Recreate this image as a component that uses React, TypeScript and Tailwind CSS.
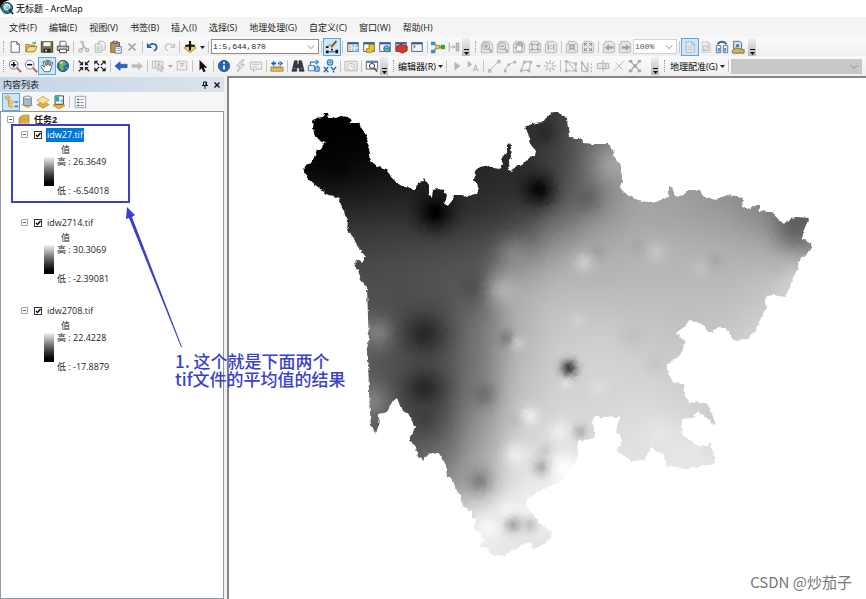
import { useState } from 'react';
import type { ReactNode } from 'react';
import clsx from 'clsx';

const GREY = '#b4b4b4';
const INK = '#222222';

const page = (stroke: string, fill = '#ffffff') => (
  <path d="M3.500 2h6.500l3 3v9H3.500z M10 2v3h3" fill={fill} stroke={stroke} />
);

const table = (extra?: ReactNode) => (
  <>
    <rect x="2" y="3" width="12" height="10" fill="#f4f8fc" stroke="#4a5568" />
    <path d="M2 4h12" stroke="#2f62a8" strokeWidth="2" />
    {extra}
  </>
);

const greyPage = (inner: ReactNode) => (
  <>
    <path d="M1.500 4.500h2v-3h8l3 3v9h-2v1h-11z" fill="#e6e6e6" stroke={GREY} />
    {inner}
  </>
);

const icons: Record<string, ReactNode> = {
  newDoc: page('#4d5a6b'),
  open: (
    <>
      <path d="M2 13V5h4l1 1h5v2" fill="#e9bf55" stroke="#9a7524" />
      <path d="M2 13.500l3-6h10l-3 6z" fill="#f9dc82" stroke="#9a7524" />
      <path d="M9 4c2-2 3-1 4 0m0-2v2h-2" fill="none" stroke="#2a9a4a" />
    </>
  ),
  save: (
    <>
      <path d="M1.500 2h13v12h-13z" fill="#77754a" stroke="#383a2c" />
      <path d="M4 2.500h8V7H4z" fill="#f5f5ee" />
      <path d="M4 10h8v4H4z" fill="#2b2b2b" />
      <path d="M6 11h2v2H6z" fill="#ddd" />
    </>
  ),
  print: (
    <>
      <path d="M4.500 7V1.500h6l1 1V7" fill="#fff" stroke="#555" />
      <path d="M1.500 7h13v5h-13z" fill="#c9c9bd" stroke="#3d3d3d" />
      <path d="M4 10.500h8v4H4z" fill="#fafafa" stroke="#333" />
      <path d="M11 8.500h2" stroke="#d1a30d" />
    </>
  ),
  cut: (
    <g fill="none" stroke={GREY} strokeWidth="1.500">
      <path d="M4 1l6 9M7 1v8l-3 2" />
      <circle cx="4" cy="12" r="1.800" />
      <circle cx="11.500" cy="11.500" r="1.800" />
    </g>
  ),
  copy: (
    <g fill="#f1f1f1" stroke={GREY}>
      <path d="M6.500 1.500h5.500l2 2v7.500H6.500z" />
      <path d="M2.500 4.500H8l2 2V14H2.500z" />
      <path d="M4 8h4M4 10h4M4 12h4" />
    </g>
  ),
  paste: (
    <>
      <rect x="2" y="3" width="10" height="11" fill="#c39253" stroke="#79501e" />
      <path d="M4.500 1.500h5v2.500h-5z" fill="#aaa" stroke="#555" />
      <path d="M7 7.500h7V15H7z" fill="#fff" stroke="#4868a0" />
      <path d="M8.500 9.500h4M8.500 12h4" stroke="#6d8ec4" />
    </>
  ),
  remove: <path d="M4 4l8 8M12 4l-8 8" stroke="#a3a3a3" strokeWidth="2" />,
  undo: (
    <>
      <path d="M4 6c4-3 9-1 8 3c0 2-2 3-3 3" fill="none" stroke="#2c5fa5" strokeWidth="2" />
      <path d="M1 3v6h6z" fill="#2c5fa5" />
    </>
  ),
  redo: (
    <>
      <path d="M12 6c-4-3-9-1-8 3c0 2 2 3 3 3" fill="none" stroke="#c9c9c9" strokeWidth="1.600" />
      <path d="M15 3v6H9z" fill="#c9c9c9" />
    </>
  ),
  addData: (
    <>
      <path d="M8 4l7 5l-7 5.500l-7-5.500z" fill="#f0cb7a" stroke="#b58a2a" />
      <path d="M8 1v11M2.500 6.500h11" stroke="#111" strokeWidth="2.400" />
    </>
  ),
  editorBar: (
    <>
      <path d="M2 8l4-3l2 3l5-6" fill="none" stroke="#ceb16b" strokeWidth="1.500" />
      <path d="M7 8l6-7" stroke="#7b552d" strokeWidth="2" />
      <path d="M1 7h3v2H1zM1 12h3v3H1zM7 10h2v2H7zM12 11h3v4h-3zM1 13h14v1H1z" fill="#111" />
    </>
  ),
  contents: table(
    <>
      <path d="M3 7h3M3 9h3M3 11h3" stroke="#dc9b28" />
      <path d="M7 5h7v8H7z" fill="#9bc9ec" />
      <path d="M7 9h7M10 5v8" stroke="#fff" />
    </>,
  ),
  catalog: table(<path d="M8 5h6v6l-3 3H5v-4h3z" fill="#edc524" stroke="#9a7a13" />),
  search: table(
    <>
      <circle cx="10" cy="10" r="3.500" fill="#77b8df" stroke="#27618f" />
      <path d="M7 10h6" stroke="#2e9a4c" strokeWidth="1.400" />
    </>,
  ),
  toolbox: table(<path d="M3 7l5-2l7 2v5l-5 3l-7-3z" fill="#d33a2a" stroke="#8a1f17" />),
  python: table(<path d="M4 6l2 1.500l-2 1.500" fill="none" stroke="#222" />),
  model: (
    <>
      <path d="M3 4l5 4M3 12l5-4h4" fill="none" stroke="#333" />
      <path d="M0 2h5v4H0zM0 11h5v4H0z" fill="#2f8fd4" />
      <path d="M5.500 6h4v4h-4z" fill="#f2cf2a" stroke="#8b760e" strokeWidth=".7" />
      <path d="M11 5.500h5v5h-5z" fill="#3aa53b" />
    </>
  ),
  snap: (
    <g stroke="#9b9b9b">
      <path d="M2.500 3v10M4 8h5M7 6l2 2l-2 2" fill="none" />
      <path d="M10.500 3.500h3v9h-3z" fill="#c8c8c8" />
    </g>
  ),
  pZoomIn: greyPage(
    <g fill="none" stroke="#989898">
      <circle cx="7" cy="7" r="4" />
      <path d="M5 7h4M7 5v4M10 10l4 4" strokeWidth="1.500" />
    </g>,
  ),
  pZoomOut: greyPage(
    <g fill="none" stroke="#989898">
      <circle cx="7" cy="7" r="4" />
      <path d="M5 7h4M10 10l4 4" strokeWidth="1.500" />
    </g>,
  ),
  pPan: greyPage(<path d="M3 8l3 5h5l1.500-8L11 4v4V3H9v4V3H7v4V4H5v5z" fill="#fafafa" stroke="#989898" />),
  pFull: greyPage(
    <>
      <circle cx="8" cy="8" r="3.500" fill="none" stroke="#a3a3a3" />
      <path d="M3 4l2.500 2M13 4l-2.500 2M3 12l2.500-2M13 12l-2.500-2" stroke="#949494" strokeWidth="1.800" />
    </>,
  ),
  pOne: greyPage(<path d="M5 5v6M11 5v6M8 6v1M8 9v1" stroke="#a3a3a3" strokeWidth="1.500" />),
  pIn: greyPage(<path d="M4 4l3 3M12 4L9 7M4 12l3-3M12 12l-3-3M4.500 7H7V4.500M9 4.500V7h2.500M4.500 9H7v2.500M11.500 9H9v2.500" fill="none" stroke="#8e8e8e" />),
  pOut: greyPage(<path d="M4 4l3 3M12 4L9 7M4 12l3-3M12 12l-3-3M4 7V4h3M9 4h3v3M4 9v3h3M12 9v3H9" fill="none" stroke="#8e8e8e" />),
  pPrev: greyPage(<path d="M3 8.500l5-4V7h5v3H8v2.500z" fill="#a3a3a3" />),
  pNext: greyPage(<path d="M14 8.500l-5-4V7H4v3h5v2.500z" fill="#a3a3a3" />),
  draft: (
    <>
      {page('#a9b4bd', '#e4ebf0')}
      <path d="M5 7h6M5 9h6M5 11h6" stroke="#c1c8cd" />
    </>
  ),
  focusFrame: (
    <>
      {page('#c7c7c7', '#eeeeee')}
      <path d="M5 7h6v5H5zM5 12l6-5" fill="none" stroke="#b7b7b7" />
    </>
  ),
  changeLayout: (
    <>
      <path d="M1.500 6.500h5v8h-5zM9.500 6.500h5v8h-5z" fill="#fff" stroke="#5a6673" />
      <path d="M3 5c2-4 8-4 10 0" fill="none" stroke="#2f6ea8" strokeWidth="2.200" />
      <path d="M3 9h3v4H3zM10 9h3v4h-3z" fill="#5c9bd0" />
    </>
  ),
  drivenPages: (
    <>
      <path d="M3 1.500h7l2 2V11H3z" fill="#d5e1ea" stroke="#596270" />
      <path d="M1 13l4-4l10 2v4H2z" fill="#cfb45d" stroke="#77672d" />
      <circle cx="7.500" cy="6.500" r="2" fill="#5f7e8d" />
    </>
  ),
  zoomIn: (
    <>
      <circle cx="6.500" cy="6.500" r="5" fill="#fff" stroke="#666" />
      <path d="M3.500 6.500h6M6.500 3.500v6" stroke="#111" strokeWidth="1.800" />
      <path d="M10 10l5 5" stroke="#a35b4c" strokeWidth="2" />
    </>
  ),
  zoomOut: (
    <>
      <circle cx="6.500" cy="6.500" r="5" fill="#fff" stroke="#777" />
      <path d="M3.500 6.500h6" stroke="#111" strokeWidth="1.800" />
      <path d="M10 10l5 5" stroke="#a35b4c" strokeWidth="2" />
    </>
  ),
  hand: (
    <path
      d="M5 14.500L1 8.500L2.500 7L5 9.500L3.500 3l1.500-.5L7 7.500L7 1.500h1.500L9 7l1-5.500l1.500.5L11 8l2-4.500L14.500 4l-2 7l-1 3.500z"
      fill="#fff"
      stroke="#394858"
      strokeWidth=".9"
    />
  ),
  globe: (
    <>
      <circle cx="8" cy="8" r="6.500" fill="#2a6cc0" stroke="#1c3e70" strokeWidth=".8" />
      <path d="M4 4l5-2l3 4l-4 2l1 4l-3 1l-2-4zM11 9l3 1l-2 2z" fill="#78b845" />
      <path d="M4 4l4-2l-2 4z" fill="#d9eab1" />
    </>
  ),
  fixedIn: (
    <>
      <path d="M2 2l4 4M14 2l-4 4M2 14l4-4M14 14l-4-4" stroke={INK} strokeWidth="1.500" />
      <path d="M7 7H2.500L7 2.500zM9 7h4.500L9 2.500zM7 9H2.500L7 13.500zM9 9h4.500L9 13.500z" fill={INK} />
    </>
  ),
  fixedOut: (
    <>
      <path d="M3 3l4 4M13 3L9 7M3 13l4-4M13 13L9 9" stroke={INK} strokeWidth="1.500" />
      <path d="M1.500 2h4.500L1.500 6.500zM14.500 2H10l4.500 4.500zM1.500 14h4.500l-4.500-4.500zM14.500 14H10l4.500-4.500z" fill={INK} />
    </>
  ),
  back: <path d="M1 8l6-5V6h8v4H7v3z" fill="#1f65cf" stroke="#174897" strokeWidth=".6" />,
  forward: <path d="M15 8L9 3v3H2v4h7v3z" fill="#bdbdbd" />,
  selectFeat: (
    <g fill="#ededed" stroke={GREY}>
      <path d="M1.500 2.500h12v8h-12zM5 2.500v8M9 2.500v8" />
      <path d="M8 5v9l2-2l2 3l1-1l-1-3h3z" fill="#d8d8d8" />
    </g>
  ),
  clearSel: (
    <g fill="#f1f1f1" stroke={GREY}>
      <path d="M2.500 2.500h11v10h-11z" />
      <path d="M6 5h4l-2 4z" />
    </g>
  ),
  pointer: <path d="M4 1v12l2.500-2.500l2 4.500l2.500-1l-2-4H13z" fill="#111" />,
  info: (
    <>
      <circle cx="8" cy="8" r="6.500" fill="#2462b5" stroke="#173f7d" strokeWidth=".7" />
      <path d="M8 3.500v2M8 7v5" stroke="#fff" strokeWidth="2" />
    </>
  ),
  lightning: <path d="M10 1L4 8h3.500L5 15l8-9H9l4-5z" fill="#e6e6e6" stroke={GREY} />,
  popup: (
    <>
      <path d="M1.500 3.500h13v8H8l-3 3v-3H1.500z" fill="#f1f1f1" stroke={GREY} />
      <path d="M4 6h8M4 9h5" stroke={GREY} />
    </>
  ),
  measure: (
    <>
      <path d="M1 9h14v5H1z" fill="#e6b96b" stroke="#9b7439" strokeWidth=".8" />
      <path d="M4 9v2M7 9v2M10 9v2M12 9v2" stroke="#7a5720" strokeWidth=".7" />
      <path d="M1 5l4-3v6zM15 5l-4-3v6zM4 4h3v2H4zM9 4h3v2H9z" fill="#1964bc" />
    </>
  ),
  binoculars: (
    <>
      <path d="M4 2h3v4h2V2h3l3 12H9.500v-4h-3v4H1z" fill="#333a42" stroke="#20252a" strokeWidth=".7" />
      <path d="M3 11h2M11 11h2" stroke="#a1a9b2" />
    </>
  ),
  route: (
    <>
      <path d="M1.500 7.500h7v6h-7z" fill="#e8f2f9" stroke="#2e75ad" />
      <path d="M4 7V3.500h7M10 1l3 2.500L10 6M12 7v3" fill="none" stroke="#2e83c5" strokeWidth="1.400" />
      <path d="M9 9h5v5H9z" fill="#8abbe0" stroke="#2e75ad" />
    </>
  ),
  goXY: (
    <>
      <circle cx="8" cy="4" r="3" fill="#fff" stroke="#2783c4" strokeWidth="1.500" />
      <path d="M8 2v4M6 4h4" stroke="#2783c4" />
      <path d="M1 9l5 6M6 9l-5 6M9 9l3 3.500L15 9M12 12v3.500" fill="none" stroke="#1769ae" strokeWidth="1.600" />
    </>
  ),
  clock: (
    <>
      <path d="M1 2.500h14v11H1z" fill="#e9e9e9" stroke={GREY} />
      <circle cx="8" cy="9" r="4" fill="#fafafa" stroke={GREY} />
      <path d="M8 6.500V9h2.500" fill="none" stroke={GREY} />
    </>
  ),
  viewer: (
    <>
      <path d="M1.500 2.500h13v9h-13z" fill="#fff" stroke="#465a70" />
      <path d="M1.500 3.500h13" stroke="#5c80ad" strokeWidth="2" />
      <circle cx="8" cy="8" r="3" fill="#e7eff6" stroke="#333" />
      <path d="M10 10l4 4.500" stroke="#90503f" strokeWidth="2" />
    </>
  ),
  editTool: <path d="M5 3v10l7-5z" fill="#b5b5b5" />,
  editNote: (
    <>
      <path d="M2 2v8l5-4z" fill="#b5b5b5" />
      <path d="M8 14l3-7l3 7M9 12h4" fill="none" stroke="#b5b5b5" strokeWidth="1.200" />
    </>
  ),
  straight: <path d="M4 12l8-8M1.500 12h3v3h-3zM12 1.500h3v3h-3z" fill="#c3c3c3" stroke={GREY} />,
  arc: (
    <>
      <path d="M3 13c0-4 4-8 10-9" fill="none" stroke={GREY} />
      <path d="M1 12h3v3H1zM12 2h3v3h-3zM5 5h3v3H5z" fill={GREY} />
    </>
  ),
  trace: (
    <>
      <path d="M2.500 13h9l2-10H6L2.500 13" fill="none" stroke={GREY} strokeWidth="1.200" />
      <path d="M1 12h3v3H1zM5 2h3v3H5zM12 2h3v3h-3zM10 12h3v3h-3z" fill={GREY} />
    </>
  ),
  burst: <path d="M8 1v5M8 10v5M1 8h5M10 8h5M3 3l3 3M10 10l3 3M13 3l-3 3M3 13l3-3" stroke={GREY} strokeWidth="1.300" />,
  vertices: (
    <>
      <path d="M2.500 2.500v11h11zM2.500 2.500l11 3v8" fill="none" stroke="#adadad" />
      <path d="M1 1h3v3H1zM1 12h3v3H1zM12 12h3v3h-3zM12 4h3v3h-3z" fill={GREY} />
    </>
  ),
  reshape: <path d="M2 14V3l7 11V4M2 14h7M13 5v2M13 9v2M13 13v2" fill="none" stroke="#adadad" strokeWidth="1.300" />,
  cutPoly: <path d="M1.500 5h13v6h-13zM8 1v14M11 5v6" fill="#e6e6e6" stroke="#ababab" />,
  splitLine: <path d="M2 14L14 2M4 4l8 8" stroke={GREY} />,
  rotate: (
    <>
      <path d="M3 3l10 10M13 3L3 13" stroke="#9f9f9f" strokeWidth="1.300" />
      <path d="M1 1h4v3H1zM11 1h4v3h-4zM1 12h4v3H1zM11 12h4v3h-4zM6 6h4v4H6z" fill="#a9a9a9" />
    </>
  ),
  byOrder: (
    <>
      <path d="M5 5v8h5M5 8h5" fill="none" stroke="#888" />
      <path d="M4 0l3.500 3L4 6L.5 3z" fill="#eeb64a" stroke="#c08a2b" strokeWidth=".6" />
      <path d="M8 5l3 3l-3 3l-3-3z" fill="#f4ca70" stroke="#c08a2b" strokeWidth=".6" />
      <path d="M8 11l3 2.500L8 16l-3-2.500z" fill="#eeb64a" />
      <path d="M12 8h4M12 13h4" stroke="#4e7eb5" strokeWidth="1.800" />
    </>
  ),
  bySource: (
    <>
      <path d="M1 11l6-3l8 4l-6 3z" fill="#f0bd54" />
      <path d="M4 3v8c1 2 8 2 9 0V3z" fill="#a8bad0" stroke="#53657c" strokeWidth=".8" />
      <ellipse cx="8.500" cy="3" rx="4.500" ry="1.800" fill="#e8eff7" stroke="#53657c" strokeWidth=".8" />
    </>
  ),
  byVisible: (
    <>
      <path d="M8 7l7 4l-7 4l-7-4z" fill="#e5ab43" stroke="#b57d23" strokeWidth=".7" />
      <path d="M8 1.500L15 6l-7 4.500L1 6z" fill="#fae2a5" stroke="#c69139" strokeWidth=".8" />
    </>
  ),
  bySelection: (
    <>
      <path d="M8 8l7 4l-7 4l-7-4z" fill="#e9ae3d" stroke="#a8761f" strokeWidth=".7" />
      <path d="M3.500 1h9.500v9.500H3.500z" fill="#fff" stroke="#333" />
      <path d="M4 1.500h4v6H4z" fill="#23aab4" />
      <path d="M8 5l4.500 5V5z" fill="#7ac3d5" />
    </>
  ),
  options: (
    <>
      <path d="M2.500 1.500h12v13h-12z" fill="#fafbfc" stroke="#8b97a4" />
      <path d="M5 4.500h2v1H5zM5 8h2v1H5zM5 11.500h2v1H5z" fill="#355d8f" stroke="#355d8f" strokeWidth=".6" />
      <path d="M8.500 5h4M8.500 8.500h4M8.500 12h4" stroke="#888" />
    </>
  ),
};

function Icon({ name }: { name: string }) {
  return (
    <svg viewBox="0 0 16 16" className="block h-[14px] w-[14px]" fill="none" aria-hidden="true">
      {icons[name]}
    </svg>
  );
}

function Caret({ muted = false }: { muted?: boolean }) {
  return (
    <svg viewBox="0 0 8 8" className="h-2 w-2 shrink-0" aria-hidden="true">
      <path d="M2 3h5L4.500 6z" fill={muted ? '#aaaaaa' : '#222222'} />
    </svg>
  );
}

function Sep() {
  return (
    <span className="flex h-3 w-[5px] shrink-0 justify-center">
      <span className="w-px bg-[#c4c4c4]" />
    </span>
  );
}

function Grip() {
  return (
    <span className="flex w-[7px] shrink-0 justify-center">
      <span className="h-3 border-l border-dotted border-[#9c9c9c]" />
    </span>
  );
}

function Overflow() {
  return (
    <button aria-label="More" className="flex h-[18px] w-2 shrink-0 items-end bg-linear-to-b from-[#f0f0f0] to-[#b8b8b8]">
      <svg viewBox="0 0 8 8" className="h-2 w-2" aria-hidden="true">
        <path d="M2 1h5v1H2zM2 4h5L4.500 7z" fill="#111111" />
      </svg>
    </button>
  );
}

function ToolButton({ name, active }: { name: string; active?: boolean }) {
  return (
    <button
      aria-label={name}
      className={clsx(
        'flex h-4 w-4 shrink-0 items-center justify-center',
        active && 'bg-[#cfe6f8] outline outline-[#5aa7e0]',
      )}
    >
      <Icon name={name} />
    </button>
  );
}

// '|' separator, 'v' caret, 'x' greyed caret, '*' prefix marks a pressed tool
function Tools({ items }: { items: string }) {
  return (
    <>
      {items.split(' ').map((item, i) => {
        if (item === '|') return <Sep key={i} />;
        if (item === 'v' || item === 'x') return <Caret key={i} muted={item === 'x'} />;
        return <ToolButton key={i} name={item.replace('*', '')} active={item.startsWith('*')} />;
      })}
    </>
  );
}

function Chevron() {
  return (
    <svg viewBox="0 0 10 10" className="pointer-events-none absolute top-1 right-1 h-2 w-2" aria-hidden="true">
      <path d="M1 3l4 4l4-4" fill="none" stroke="#777777" />
    </svg>
  );
}

const menus = ['文件(F)', '编辑(E)', '视图(V)', '书签(B)', '插入(I)', '选择(S)', '地理处理(G)', '自定义(C)', '窗口(W)', '帮助(H)'];

interface RasterLayer {
  name: string;
  high: string;
  low: string;
}

const layers: RasterLayer[] = [
  { name: 'idw27.tif', high: '26.3649', low: '-6.54018' },
  { name: 'idw2714.tif', high: '30.3069', low: '-2.39081' },
  { name: 'idw2708.tif', high: '22.4228', low: '-17.8879' },
];

function Expander() {
  return (
    <svg viewBox="0 0 7 7" className="h-[7px] w-[7px] shrink-0" aria-hidden="true">
      <path d="M.5.5h6v6h-6z" fill="#fff" stroke="#a5a5a5" />
      <path d="M2 3.500h3" stroke="#3f5f9f" />
    </svg>
  );
}

function LayerItem({ layer, selected }: { layer: RasterLayer; selected: boolean }) {
  const [visible, setVisible] = useState(true);
  return (
    <li className="mb-[18px]">
      <div className="flex h-[15px] items-center pl-5">
        <Expander />
        <label className="flex items-center">
          <span className="relative ml-[6px] h-2 w-2">
            <input
              type="checkbox"
              checked={visible}
              onChange={(e) => setVisible(e.target.checked)}
              className="block h-2 w-2 appearance-none border border-[#333333] bg-white"
            />
            {visible && (
              <svg viewBox="0 0 8 8" className="pointer-events-none absolute inset-0 h-2 w-2" aria-hidden="true">
                <path d="M2 4l1.500 1.500L6.500 2" fill="none" stroke="#000" strokeWidth="1.300" />
              </svg>
            )}
          </span>
          <span
            className={clsx(
              'ml-1 flex h-[14px] items-center px-px',
              selected && 'bg-[#0078d7] text-white',
            )}
          >
            {layer.name}
          </span>
        </label>
      </div>
      <div className="flex h-[14px] items-center pl-[60px]">值</div>
      <div className="flex h-[41px] pl-[43px]">
        <div className="mt-px h-[29px] w-[10px] bg-linear-to-b from-[#f5f5f5] to-black" />
        <div className="ml-[3px] flex flex-col justify-between leading-3">
          <span>高 : {layer.high}</span>
          <span>低 : {layer.low}</span>
        </div>
      </div>
    </li>
  );
}

// Province outline, map units
const outline =
  '312,122 316,118 324,117 325,113 327,113 328,118 335,118 340,116 349,117 351,123 359,123 362,129 366,134 369,148 371,161 378,167 387,169 391,177 397,183 405,188 407,186 412,190 416,190 417,183 423,181 424,178 426,181 429,185 429,194 432,197 433,190 438,189 444,190 447,195 446,200 443,203 448,206 451,202 454,195 462,195 467,197 470,195 477,194 479,188 474,180 475,172 480,167 489,165 493,168 500,169 503,165 500,160 502,156 507,153 507,145 509,143 511,147 512,157 509,163 508,168 512,171 515,167 522,165 527,160 529,157 535,155 536,151 531,145 529,133 524,127 535,123 544,122 547,116 553,112 558,112 561,115 567,118 568,128 569,137 575,139 580,139 582,137 583,143 593,144 608,144 613,150 615,159 619,163 621,172 623,182 619,187 625,193 635,199 647,202 657,202 663,198 668,197 669,187 672,187 675,197 683,195 689,190 700,190 703,197 713,200 727,195 744,197 743,207 751,209 754,205 759,205 760,211 772,212 777,218 784,224 790,218 797,217 809,218 806,225 801,237 812,245 812,249 805,255 799,262 797,270 792,280 790,287 787,293 785,297 773,295 767,296 765,303 766,308 760,320 755,332 747,339 736,341 731,337 726,328 718,328 712,332 707,332 705,326 697,322 688,321 685,326 676,333 680,337 685,342 684,350 678,357 667,365 667,370 672,380 673,383 683,384 685,395 689,403 697,401 708,404 711,412 713,417 716,425 712,423 707,418 702,414 697,411 694,418 683,419 681,427 682,436 688,437 693,443 699,446 710,445 713,452 715,463 707,465 698,467 685,469 673,466 665,468 666,462 663,453 657,452 652,447 648,452 645,460 632,461 623,456 617,449 622,446 621,437 616,434 617,425 621,417 610,417 594,417 593,423 595,437 587,439 578,442 577,450 579,457 573,465 560,482 548,487 528,498 525,503 532,513 540,523 552,532 551,538 543,545 533,549 531,542 522,545 510,552 503,556 492,555 488,548 480,546 484,540 478,531 473,529 477,518 472,518 472,512 463,506 461,495 456,490 453,480 448,477 447,467 442,458 438,452 428,454 423,460 418,457 416,447 410,440 415,427 408,413 402,411 397,398 392,402 387,412 379,414 378,428 376,433 371,426 370,413 369,390 368,357 366,352 369,340 368,317 367,287 361,280 358,270 354,265 357,259 362,263 366,257 358,247 353,237 347,230 348,220 342,208 339,199 333,196 326,194 310,180 304,173 305,165 312,163 314,157 318,150 325,143 317,139 314,133';

// Interpolated surface, 40x30 cells starting at (300, 110)
const surface = [
  [0, 0, 0, 10, 30, 46, 66, 115, 140, 150, 150, 140, 105],
  [2, 4, 14, 20, 36, 44, 66, 125, 165, 160, 150, 140, 105],
  [16, 20, 26, 30, 42, 42, 74, 128, 162, 158, 145, 130, 95],
  [42, 44, 46, 44, 50, 62, 100, 142, 166, 162, 155, 138, 88],
  [62, 64, 68, 70, 76, 100, 150, 170, 176, 176, 174, 168, 135],
  [76, 76, 78, 84, 90, 160, 180, 180, 184, 184, 182, 188, 212],
  [84, 80, 78, 80, 105, 180, 192, 192, 190, 190, 190, 198, 215],
  [110, 100, 78, 76, 120, 180, 202, 206, 200, 196, 198, 212, 218],
  [98, 90, 80, 80, 120, 188, 206, 212, 208, 204, 204, 210, 215],
  [108, 105, 76, 74, 130, 194, 210, 212, 216, 210, 206, 205, 205],
  [90, 94, 78, 84, 150, 206, 218, 218, 222, 222, 196, 200, 200],
  [90, 90, 86, 108, 165, 218, 230, 226, 224, 230, 226, 220, 220],
  [110, 110, 115, 140, 180, 230, 240, 245, 230, 230, 230, 225, 225],
  [150, 150, 160, 190, 228, 245, 250, 255, 240, 235, 230, 230, 230],
  [180, 180, 190, 220, 238, 226, 222, 225, 230, 230, 230, 230, 230],
];

// Station influence: x, y, radius, grey, opacity
const stations = [
  [435, 212, 25, 0, 1],
  [539, 190, 23, 5, 1],
  [545, 132, 18, 30, 0.6],
  [337, 168, 20, 0, 0.6],
  [587, 198, 22, 80, 0.6],
  [424, 334, 30, 35, 0.9],
  [424, 388, 28, 35, 0.9],
  [424, 420, 24, 55, 0.6],
  [475, 288, 22, 60, 0.5],
  [483, 394, 18, 100, 0.7],
  [479, 481, 19, 115, 0.8],
  [569, 368, 12, 60, 1],
  [506, 338, 12, 110, 0.7],
  [542, 467, 13, 155, 0.8],
  [545, 451, 11, 185, 0.6],
  [513, 524, 13, 145, 0.8],
  [530, 525, 12, 175, 0.7],
  [515, 419, 12, 175, 0.6],
  [378, 333, 22, 155, 0.55],
  [374, 402, 24, 150, 0.6],
  [580, 432, 11, 160, 0.7],
  [613, 165, 24, 180, 0.6],
  [795, 228, 26, 85, 0.6],
  [596, 252, 12, 145, 0.5],
  [638, 247, 11, 155, 0.4],
  [715, 260, 12, 155, 0.5],
  [777, 267, 12, 175, 0.5],
  [584, 263, 15, 215, 0.7],
  [657, 252, 15, 205, 0.7],
  [700, 268, 14, 200, 0.5],
  [502, 290, 24, 200, 0.6],
  [514, 255, 24, 165, 0.4],
  [518, 343, 10, 220, 0.6],
  [530, 416, 14, 244, 0.8],
  [560, 432, 15, 242, 0.8],
  [516, 455, 17, 244, 0.8],
  [565, 468, 20, 255, 1],
  [487, 527, 18, 252, 0.7],
  [507, 510, 14, 252, 0.6],
  [566, 384, 8, 232, 0.7],
  [599, 387, 12, 228, 0.6],
  [578, 320, 10, 220, 0.5],
  [660, 435, 22, 236, 0.5],
  [690, 452, 22, 236, 0.5],
  [632, 337, 18, 186, 0.5],
  [656, 363, 16, 192, 0.5],
];

function RasterMap() {
  return (
    <svg viewBox="229 78 637 521" className="block w-[637px] shrink-0" role="img" aria-label="idw27.tif">
      <defs>
        <filter id="soften" x="-10%" y="-10%" width="120%" height="120%" colorInterpolationFilters="sRGB">
          <feGaussianBlur stdDeviation="14" />
        </filter>
        <filter id="coast" x="-5%" y="-5%" width="110%" height="110%" colorInterpolationFilters="sRGB">
          <feTurbulence type="fractalNoise" baseFrequency="0.22" numOctaves="2" seed="4" />
          <feDisplacementMap in="SourceGraphic" scale="4" xChannelSelector="R" yChannelSelector="G" />
        </filter>
        <clipPath id="province">
          <polygon points={outline} />
        </clipPath>
        {stations.map(([, , , grey, opacity], i) => (
          <radialGradient key={i} id={`station-${i}`}>
            <stop offset="0" stopColor={`rgb(${grey},${grey},${grey})`} stopOpacity={opacity} />
            <stop offset=".15" stopColor={`rgb(${grey},${grey},${grey})`} stopOpacity={opacity * 0.88} />
            <stop offset=".35" stopColor={`rgb(${grey},${grey},${grey})`} stopOpacity={opacity * 0.54} />
            <stop offset=".6" stopColor={`rgb(${grey},${grey},${grey})`} stopOpacity={opacity * 0.19} />
            <stop offset=".8" stopColor={`rgb(${grey},${grey},${grey})`} stopOpacity={opacity * 0.05} />
            <stop offset="1" stopColor={`rgb(${grey},${grey},${grey})`} stopOpacity="0" />
          </radialGradient>
        ))}
      </defs>
      <g filter="url(#coast)">
        <g clipPath="url(#province)">
          <g filter="url(#soften)">
            <rect x="240" y="60" width="620" height="80" fill="#303030" />
            <rect x="240" y="110" width="70" height="90" fill="#060606" />
            <rect x="300" y="60" width="110" height="60" fill="#000000" />
            {surface.map((row, r) =>
              row.map((grey, c) => (
                <rect
                  key={`${r}-${c}`}
                  x={300 + c * 40}
                  y={110 + r * 30}
                  width={c === row.length - 1 ? 80 : 41}
                  height={r === surface.length - 1 ? 60 : 31}
                  fill={`rgb(${grey},${grey},${grey})`}
                />
              )),
            )}
          </g>
          {stations.map(([x, y, radius], i) => (
            <circle key={i} cx={x} cy={y} r={radius * 1.4} fill={`url(#station-${i})`} />
          ))}
        </g>
      </g>
    </svg>
  );
}

function AppLogo() {
  return (
    <svg viewBox="0 0 15 17" className="h-[17px] w-[15px]" aria-hidden="true">
      <path d="M0 0h10C4 1 1 4 0 10z" fill="#000" />
      <circle cx="7" cy="8" r="5.500" fill="#2b7f9f" stroke="#153c52" />
      <path d="M3 6l3-3l3 1l-1 3l-3 1z" fill="#7fc07c" />
      <circle cx="7" cy="7" r="3" fill="#bde6ee" fillOpacity=".6" stroke="#eef8fa" />
      <path d="M9 9l4 5" stroke="#123047" strokeWidth="2" />
    </svg>
  );
}

export default function App() {
  return (
    <div className="relative flex h-screen flex-col overflow-hidden bg-white font-['Open_Sans','Noto_Sans_CJK_SC',sans-serif] text-[9px] leading-none text-[#1c1c1c]">
      <header className="flex h-[17px] shrink-0 items-center gap-px text-black">
        <AppLogo />
        <h1>无标题 - ArcMap</h1>
      </header>

      <nav className="flex h-5 shrink-0 items-center gap-3 bg-[#f4f4f4] pl-[9px] whitespace-nowrap">
        {menus.map((menu) => (
          <button key={menu}>{menu}</button>
        ))}
      </nav>

      <div className="flex h-[19px] shrink-0 items-center bg-linear-to-b from-[#fafafa] to-[#f0f0f0]">
        <Grip />
        <Tools items="newDoc open save print | cut copy paste remove | undo redo | addData v |" />
        <div className="relative w-[108px] shrink-0">
          <select
            aria-label="地图比例"
            className="block h-[15px] w-full appearance-none border border-[#8c8c8c] bg-white px-px font-['Liberation_Mono',monospace] text-[8px]"
          >
            <option>1:5,644,870</option>
          </select>
          <Chevron />
        </div>
        <Tools items="| *editorBar | contents catalog search toolbox python | model snap" />
        <Overflow />
        <span className="w-[2px]" />
        <Grip />
        <Tools items="pZoomIn pZoomOut pPan pFull pOne | pIn pOut | pPrev pNext" />
        <div className="relative w-11 shrink-0">
          <select
            aria-label="缩放"
            className="block h-[15px] w-full appearance-none border border-[#d0d0d0] bg-white px-px font-['Liberation_Mono',monospace] text-[8px] text-[#555555]"
          >
            <option>100%</option>
          </select>
          <Chevron />
        </div>
        <Tools items="| *draft focusFrame changeLayout drivenPages" />
        <span className="w-[2px]" />
        <Overflow />
      </div>

      <div className="flex h-5 shrink-0 items-center bg-linear-to-b from-[#fafafa] to-[#efefef] whitespace-nowrap">
        <Grip />
        <Tools items="zoomIn zoomOut *hand globe | fixedIn fixedOut | back forward | selectFeat x clearSel | pointer | info lightning popup | measure | binoculars route goXY | clock | viewer" />
        <Overflow />
        <span className="w-[2px]" />
        <Grip />
        <button className="flex items-center pl-px text-black">
          编辑器(R)
          <Caret />
        </button>
        <Tools items="| editTool editNote | straight arc trace x burst | vertices reshape cutPoly splitLine rotate" />
        <span className="w-2" />
        <Overflow />
        <span className="w-[2px]" />
        <Grip />
        <button className="flex items-center pl-[2px] text-black">
          地理配准(G)
          <Caret />
        </button>
        <Sep />
        <div className="relative mr-1 flex-1">
          <select aria-label="配准图层" disabled className="block h-[15px] w-full appearance-none bg-[#c8c8c8]" />
          <Chevron />
        </div>
      </div>

      <div className="flex min-h-0 flex-1 bg-[#f0f0f0]">
        <aside className="flex w-[224px] shrink-0 flex-col">
          <div className="mt-px flex h-[15px] items-center bg-linear-to-r from-[#c3d6e8] to-[#dce3eb] pr-[3px] pl-[3px]">
            <h2 className="flex-1">内容列表</h2>
            <button aria-label="固定" className="mr-1">
              <svg viewBox="0 0 8 8" className="h-2 w-2" aria-hidden="true">
                <path d="M2.500 1h3v3.500h-3zM1 4.500h6M4 5v3M5 1v3" fill="none" stroke="#111" />
              </svg>
            </button>
            <button aria-label="关闭">
              <svg viewBox="0 0 8 8" className="h-2 w-2" aria-hidden="true">
                <path d="M1.500 1.500l5 5M6.500 1.500l-5 5" stroke="#111" strokeWidth="1.400" />
              </svg>
            </button>
          </div>
          <div className="flex h-[19px] items-center bg-[#f7f7f7] pl-[3px]">
            <Tools items="*byOrder bySource byVisible bySelection | options" />
          </div>
          <div className="flex-1 border border-[#8e98a3] bg-white">
            <div className="flex h-[15px] items-center pl-[6px]">
              <Expander />
              <svg viewBox="0 0 12 12" className="mx-1 h-3 w-3" aria-hidden="true">
                <path d="M1 8l3-2h7v3l-3 2H1zM1 5l3-2h7v3l-3 2H1zM2 3l3-2h6v2L8 5H1z" fill="#f2c45e" stroke="#b38022" strokeWidth=".7" />
              </svg>
              <span className="font-bold">任务2</span>
            </div>
            <ul>
              {layers.map((layer, i) => (
                <LayerItem key={layer.name} layer={layer} selected={i === 0} />
              ))}
            </ul>
          </div>
        </aside>

        <main className="ml-[3px] flex min-w-0 flex-1 overflow-hidden border-t-2 border-l-2 border-[#858585] bg-white">
          <RasterMap />
        </main>
      </div>

      {/* Markup drawn over the window */}
      <div className="pointer-events-none absolute top-[124px] left-[11px] h-[79px] w-[119px] border-2 border-[#3a41c6]" />
      <svg viewBox="120 200 70 150" className="pointer-events-none absolute top-[200px] left-[120px] h-[150px] w-[70px]" aria-hidden="true">
        <polygon points="127,207 135,215 132,217 182,347 181,347 129,218 126,219" fill="#3a41c6" />
      </svg>
      <p className="pointer-events-none absolute top-[352px] left-[175px] font-['Noto_Sans_CJK_SC',sans-serif] text-[17px] leading-[18px] font-medium whitespace-nowrap text-[#3a41c6]">
        1. 这个就是下面两个
        <br />
        tif文件的平均值的结果
      </p>
      <p className="pointer-events-none absolute right-[14px] bottom-2 font-['Noto_Sans_CJK_SC',sans-serif] text-[15px] leading-[18px] text-[#777777]">
        CSDN @炒茄子
      </p>
    </div>
  );
}
